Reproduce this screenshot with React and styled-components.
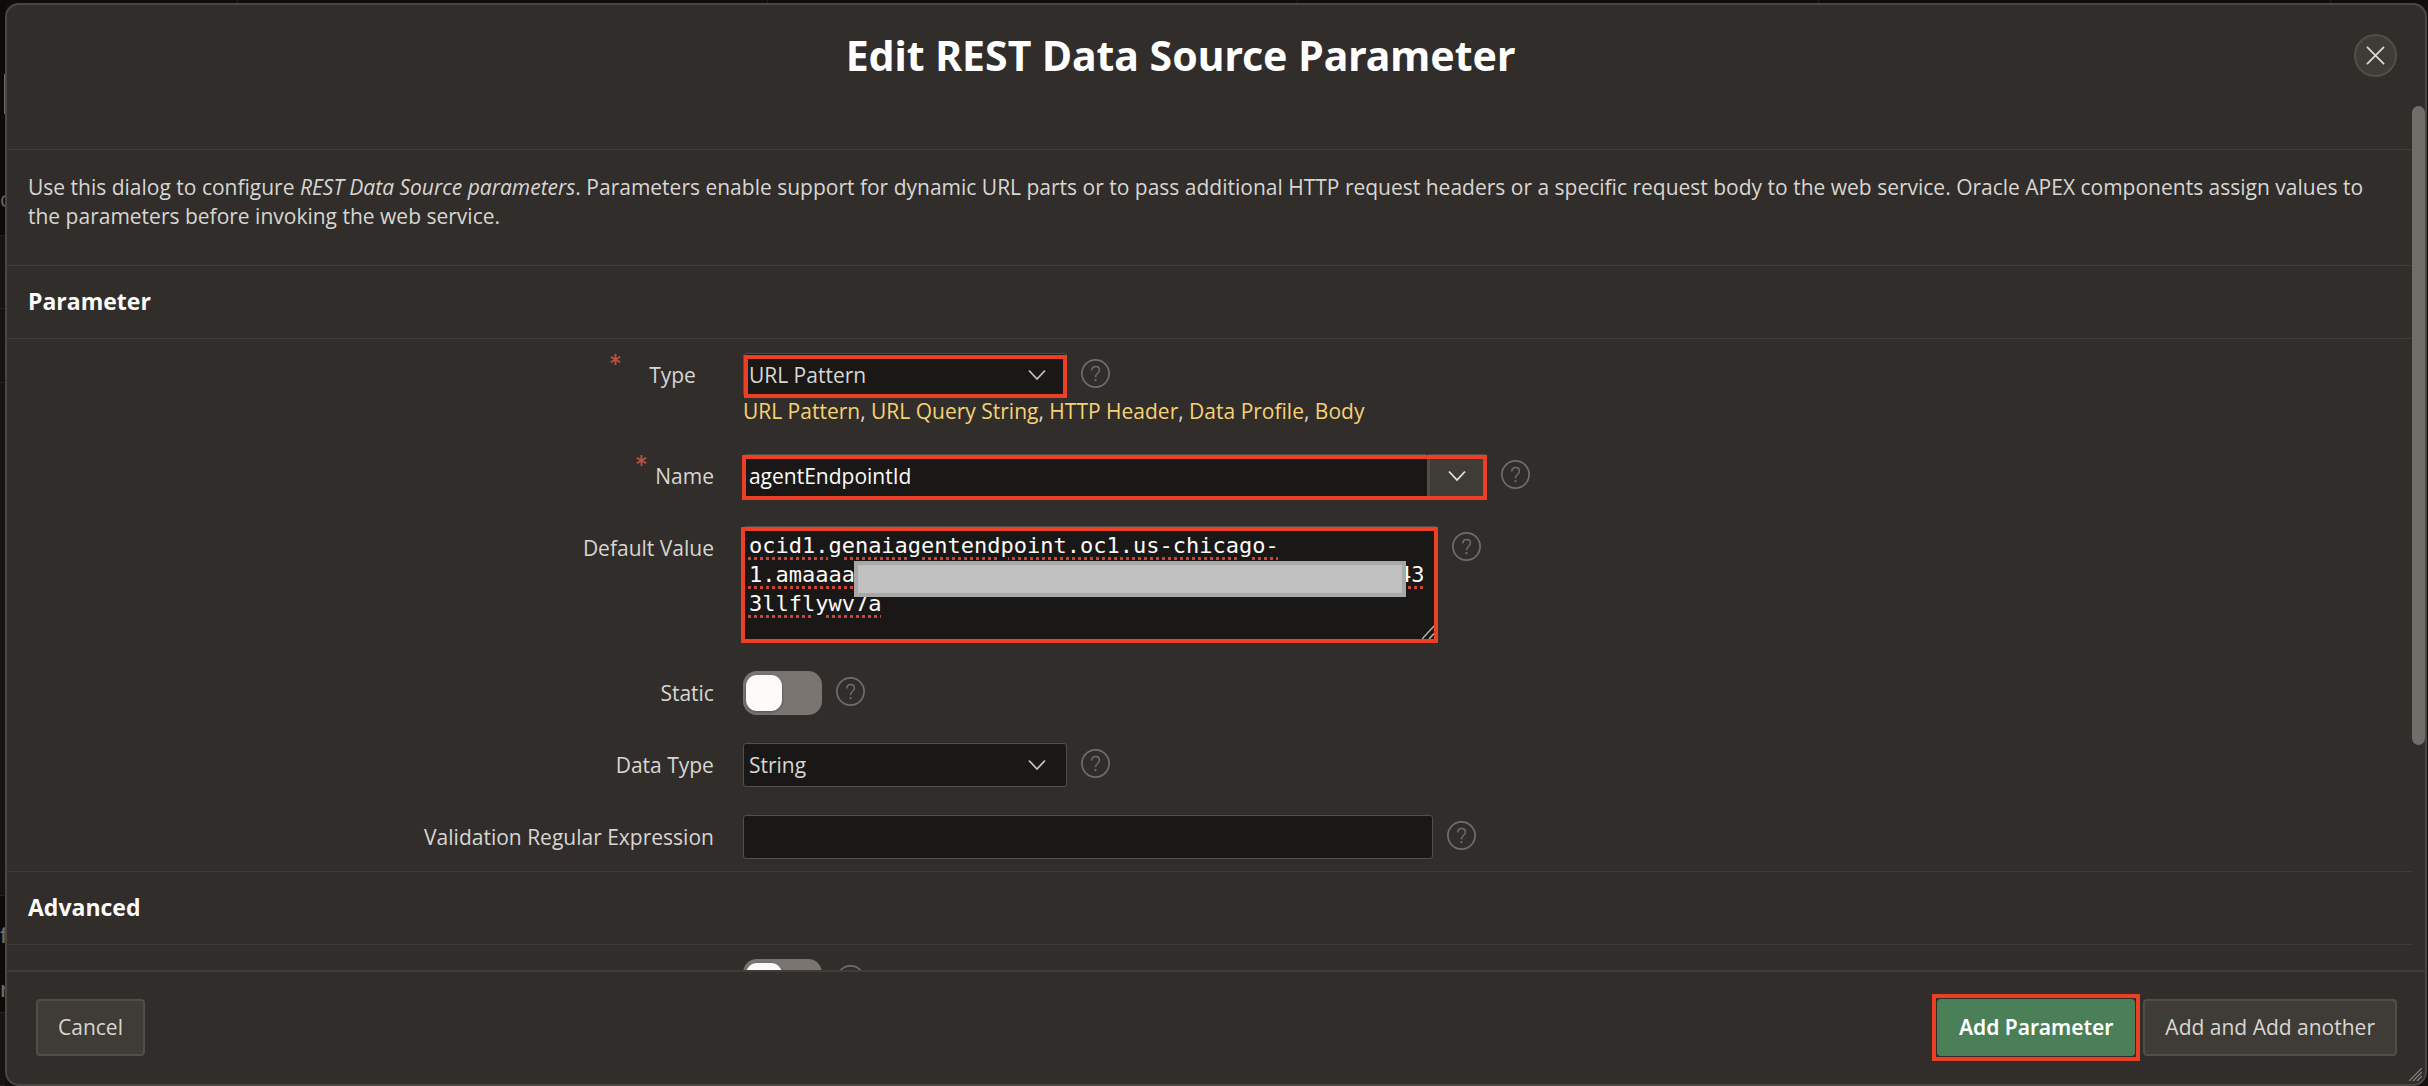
import React, { useState } from 'react';
import styled, { createGlobalStyle, css } from 'styled-components';

const c = {
  surface: '#312d2a',
  line: '#403d39',
  edge: '#4a4743',
  field: '#191816',
  fieldEdge: '#524f4b',
  button: '#3f3c37',
  buttonEdge: '#514e49',
  text: '#d8d6d2',
  bright: '#fcfbfa',
  muted: '#716d69',
  link: '#f6d274',
  green: '#4a7f58',
  mark: '#ec4026',
  required: '#bf5140',
};

const GlobalStyle = createGlobalStyle`
  *, *::before, *::after { box-sizing: border-box; }
  body { margin: 0; background: #11100f; }
  body, button, input, select {
    font-family: "Open Sans", "Noto Sans", sans-serif;
    font-size: 21px;
    line-height: 29px;
    color: ${c.text};
  }
`;

/* Page behind the dialog */
const Page = styled.div`
  height: 100vh;
  display: grid;
  grid-template-columns: 5px minmax(0, 1fr) 1px;
  grid-template-rows: 3px minmax(0, 1fr);
  background: #11100f;
  overflow: hidden;
`;
const TopStrip = styled.div`
  grid-column: 1 / -1;
  display: grid;
  grid-template-columns: 238fr 530fr 530fr 521fr 512fr 97fr;
  background: #0e0d0c;
`;
const TopCell = styled.div`
  border-right: 1px solid #201f1d;
  &:last-child { border-right: 0; }
`;
const LeftStrip = styled.div`
  display: flex;
  flex-direction: column;
  overflow: hidden;
`;
const BackRow = styled.div`
  flex: ${p => p.$grow} 0 0;
  min-height: 0;
  display: flex;
  flex-direction: column;
  gap: ${p => p.$gap || 0}px;
  overflow: hidden;
  background: ${p => (p.$dark ? '#0c0b0a' : '#151413')};
  border-bottom: 1px solid #252321;
  color: #6b6967;
  font-weight: ${p => (p.$bold ? 600 : 400)};
  &::before {
    content: '';
    flex: none;
  }
`;
const BackField = styled.div`
  width: 1px;
  height: 40px;
  margin-left: auto;
  background: #6b6967;
`;

/* Dialog */
const Dialog = styled.main`
  position: relative;
  display: flex;
  flex-direction: column;
  min-height: 0;
  background: ${c.surface};
  border: 2px solid ${c.edge};
  border-radius: 14px;
`;
const Header = styled.header`
  display: flex;
  align-items: center;
  padding: 22px 28px 21px 0;
`;
const Title = styled.h1`
  flex: 1;
  margin: 0;
  text-align: center;
  font-family: "Noto Sans", "Open Sans", sans-serif;
  font-size: 41px;
  line-height: 56px;
  font-weight: 700;
  color: #fff;
`;
const CloseButton = styled.button`
  display: grid;
  place-items: center;
  width: 43px;
  height: 43px;
  padding: 0;
  border: 2px solid ${c.buttonEdge};
  border-radius: 50%;
  background: ${c.button};
`;
const ScrollArea = styled.div`
  flex: 1;
  min-height: 0;
  display: flex;
  overflow: hidden;
`;
const Content = styled.div`
  flex: 1;
  min-width: 0;
  padding-top: 45px;
`;
const Gutter = styled.div`
  width: 13px;
  padding-top: 2px;
`;
const Thumb = styled.div`
  height: 74%;
  border-radius: 7px;
  background: ${c.muted};
`;
const Intro = styled.p`
  margin: 0;
  padding: 23px 21px 34px;
  border-top: 1px solid ${c.line};
`;
const SectionTitle = styled.h2`
  margin: 0;
  padding: 19px 21px 20px;
  border: 1px solid ${c.line};
  border-width: 1px 0;
  font-size: 23px;
  line-height: 33px;
  font-weight: 700;
  color: ${c.bright};
`;
const Fields = styled.div`
  display: grid;
  gap: 28px;
  padding: 14px 0 12px;
`;
const Row = styled.div`
  display: grid;
  grid-template-columns: 30.6% minmax(0, 1fr);
`;
const LabelCell = styled.div`
  display: flex;
  justify-content: flex-end;
  gap: ${p => (p.$wide ? 28 : 8)}px;
  padding: 8px ${p => (p.$wide ? 47 : 29)}px 0 0;
`;
const Required = styled.svg`
  width: 11px;
  height: 11px;
  margin-top: -7px;
`;
const Control = styled.div`
  display: flex;
  align-items: flex-start;
  gap: 14px;
`;
const HelpButton = styled.button`
  width: 29px;
  height: 29px;
  margin-top: 6px;
  padding: 0;
  border: 0;
  background: none;
  svg { display: block; }
`;
const markOverlay = css`
  &::after {
    content: '';
    position: absolute;
    inset: ${p => p.$mark};
    border: 4px solid ${c.mark};
    pointer-events: none;
  }
`;
const Box = styled.div`
  position: relative;
  display: flex;
  width: ${p => p.$width}px;
  ${p => p.$mark && markOverlay}
`;
const fieldLook = css`
  flex: 1;
  min-width: 0;
  height: 44px;
  margin: 0;
  padding: 0 5px;
  border: 1px solid ${c.fieldEdge};
  border-radius: 3px;
  background: ${c.field};
  outline: 0;
`;
const TextInput = styled.input`
  ${fieldLook}
  color: ${c.bright};
`;
const Select = styled.select`
  ${fieldLook}
  appearance: none;
`;
const SelectArrow = styled.span`
  position: absolute;
  right: 21px;
  top: 0;
  bottom: 0;
  display: flex;
  align-items: center;
  pointer-events: none;
`;
const ListButton = styled.button`
  display: grid;
  place-items: center;
  width: 59px;
  height: 44px;
  padding: 0;
  border: 2px solid ${c.buttonEdge};
  border-radius: 0 3px 3px 0;
  background: ${c.button};
`;
const TextArea = styled.textarea`
  ${fieldLook}
  height: 117px;
  padding: 4px 5px;
  resize: none;
  overflow: hidden;
  white-space: pre;
  font-family: "DejaVu Sans Mono", monospace;
  font-size: 22px;
  line-height: 29px;
  color: ${c.bright};
  text-decoration: underline dotted #c9443a 3px;
  text-underline-offset: 4px;
`;
const Redaction = styled.span`
  position: absolute;
  left: 111px;
  top: 35px;
  width: 552px;
  height: 36px;
  border: 4px solid #a8a8a8;
  background: #c0c0c0;
`;
const CornerGrip = styled.svg`
  position: absolute;
  right: ${p => p.$inset}px;
  bottom: ${p => p.$inset}px;
`;
const Switch = styled.input`
  appearance: none;
  display: flex;
  width: 79px;
  height: 44px;
  margin: 0;
  padding: 4px 3px;
  border-radius: 14px;
  background: #7a7570;
  &::before {
    content: '';
    width: 36px;
    height: 36px;
    border-radius: 11px;
    background: ${c.bright};
    box-shadow: 0 1px 3px rgba(0, 0, 0, 0.35);
  }
  &:checked { justify-content: flex-end; background: ${c.green}; }
`;
const Links = styled.div`
  a { color: ${c.link}; text-decoration: none; }
`;
const Footer = styled.footer`
  display: flex;
  justify-content: space-between;
  padding: 27px 28px 28px 29px;
  border-top: 2px solid ${c.line};
`;
const Actions = styled.div`
  display: flex;
  gap: 8px;
`;
const Button = styled.button`
  position: relative;
  height: 57px;
  padding: 0 20px;
  border: 2px solid ${c.buttonEdge};
  border-radius: 4px;
  background: ${c.button};
  ${p => p.$primary && css`
    border-color: ${c.green};
    background: ${c.green};
    color: #fff;
    font-family: "Noto Sans", "Open Sans", sans-serif;
    font-weight: 600;
  `}
  ${p => p.$mark && markOverlay}
`;

const Chevron = ({ color = '#c4c1bd' }) => (
  <svg width="18" height="12" viewBox="0 0 18 12" fill="none" aria-hidden="true">
    <path d="M1 1.5 9 10 17 1.5" stroke={color} strokeWidth="1.8" />
  </svg>
);
const Help = ({ about }) => (
  <HelpButton type="button" aria-label={`Help: ${about}`}>
    <svg width="29" height="29" viewBox="0 0 29 29" fill="none" stroke={c.muted}>
      <circle cx="14.5" cy="14.5" r="13.6" strokeWidth="1.7" />
      <path d="M10.7 11.6C10.7 9 12.3 7.6 14.6 7.6C16.8 7.6 18.4 9 18.4 11.2C18.4 12.8 17.6 13.6 16.4 14.5C15.2 15.4 14.5 16.1 14.5 18.2" strokeWidth="1.5" />
      <circle cx="14.5" cy="21.2" r="1.1" fill={c.muted} stroke="none" />
    </svg>
  </HelpButton>
);
const Asterisk = () => (
  <Required viewBox="0 0 11 11" stroke={c.required} strokeWidth="1.8" aria-hidden="true">
    <path d="M5.5 0V11M0.8 2.8 10.2 8.2M10.2 2.8 0.8 8.2" />
  </Required>
);

function Field({ id, label, required, wide, children, after }) {
  return (
    <Row>
      <LabelCell $wide={wide}>
        {required && <Asterisk />}
        <label htmlFor={id}>{label}</label>
      </LabelCell>
      <div>
        <Control>
          {children}
          <Help about={label} />
        </Control>
        {after}
      </div>
    </Row>
  );
}

function DropDown({ id, value, onChange, options, mark }) {
  return (
    <Box $width={324} $mark={mark}>
      <Select id={id} value={value} onChange={e => onChange(e.target.value)}>
        {options.map(o => <option key={o}>{o}</option>)}
      </Select>
      <SelectArrow><Chevron /></SelectArrow>
    </Box>
  );
}

const TYPES = ['URL Pattern', 'URL Query String', 'HTTP Header', 'Data Profile', 'Body'];
const ENDPOINT = 'ocid1.genaiagentendpoint.oc1.us-chicago-\n1.amaaaa' + ' '.repeat(41) + '43\n3llflywv7a';

export default function App() {
  const [type, setType] = useState('URL Pattern');
  const [dataType, setDataType] = useState('String');
  return (
    <Page>
      <GlobalStyle />
      <TopStrip aria-hidden="true">
        {[0, 1, 2, 3, 4, 5].map(i => <TopCell key={i} />)}
      </TopStrip>
      <LeftStrip aria-hidden="true">
        <BackRow $grow={233} $gap={71} $dark><BackField /><span>c</span></BackRow>
        <BackRow $grow={73} />
        <BackRow $grow={73} />
        <BackRow $grow={515} />
        <BackRow $grow={117} $gap={25} $dark $bold><span>f</span><span>r</span></BackRow>
        <BackRow $grow={72} />
      </LeftStrip>
      <Dialog>
        <Header>
          <Title>Edit REST Data Source Parameter</Title>
          <CloseButton type="button" aria-label="Close">
            <svg width="19" height="19" viewBox="0 0 20 20" stroke="#dedcd9" strokeWidth="1.8">
              <path d="M1 1 19 19M19 1 1 19" />
            </svg>
          </CloseButton>
        </Header>
        <ScrollArea>
          <Content>
            <Intro>
              Use this dialog to configure <em>REST Data Source parameters</em>. Parameters enable
              support for dynamic URL parts or to pass additional HTTP request headers or a specific
              request body to the web service. Oracle APEX components assign values to the parameters
              before invoking the web service.
            </Intro>
            <SectionTitle>Parameter</SectionTitle>
            <Fields>
              <Field
                id="type"
                label="Type"
                required
                wide
                after={
                  <Links>
                    {TYPES.map((t, i) => (
                      <React.Fragment key={t}>
                        {i > 0 && ', '}
                        <a href="#type" onClick={() => setType(t)}>{t}</a>
                      </React.Fragment>
                    ))}
                  </Links>
                }
              >
                <DropDown id="type" value={type} onChange={setType} options={TYPES} mark="2px 0 -1px 1px" />
              </Field>
              <Field id="name" label="Name" required>
                <Box $width={744} $mark="1px 0 -2px -1px">
                  <TextInput id="name" defaultValue="agentEndpointId" />
                  <ListButton type="button" aria-label="Show names"><Chevron color="#e6e4e1" /></ListButton>
                </Box>
              </Field>
              <Field id="default-value" label="Default Value">
                <Box $width={695} $mark="1px 0 0 -2px">
                  <TextArea id="default-value" defaultValue={ENDPOINT} spellCheck={false} />
                  <Redaction />
                  <CornerGrip $inset={4} width="12" height="14" viewBox="0 0 12 14" stroke="#b5b3b0" strokeWidth="1.5">
                    <path d="M0 14 12 1M7 14 12 8.6" />
                  </CornerGrip>
                </Box>
              </Field>
              <Field id="static" label="Static">
                <Switch id="static" type="checkbox" role="switch" />
              </Field>
              <Field id="data-type" label="Data Type">
                <DropDown id="data-type" value={dataType} onChange={setDataType} options={['String', 'Number', 'Date']} />
              </Field>
              <Field id="validation" label="Validation Regular Expression">
                <Box $width={690}>
                  <TextInput id="validation" />
                </Box>
              </Field>
            </Fields>
            <SectionTitle>Advanced</SectionTitle>
            <Fields>
              <Row>
                <LabelCell />
                <Control>
                  <Switch type="checkbox" role="switch" aria-label="Advanced option" />
                  <Help about="Advanced option" />
                </Control>
              </Row>
            </Fields>
          </Content>
          <Gutter aria-hidden="true"><Thumb /></Gutter>
        </ScrollArea>
        <Footer>
          <Button type="button">Cancel</Button>
          <Actions>
            <Button type="button" $primary $mark="-7px">Add Parameter</Button>
            <Button type="button">Add and Add another</Button>
          </Actions>
        </Footer>
        <CornerGrip $inset={3} width="13" height="13" viewBox="0 0 13 13" stroke="#8a8783" strokeWidth="1.2" aria-hidden="true">
          <path d="M0 13 13 0M4 13 13 4M8 13 13 8" />
        </CornerGrip>
      </Dialog>
    </Page>
  );
}
